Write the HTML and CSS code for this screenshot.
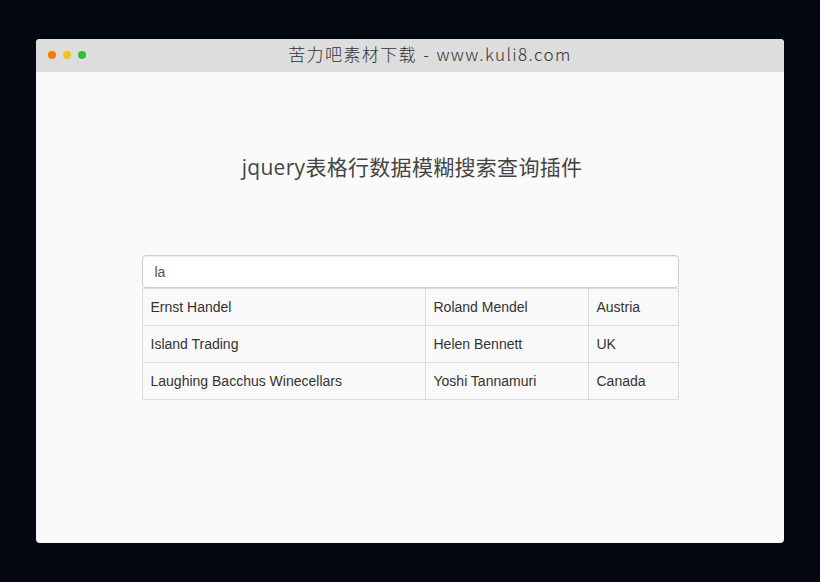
FILE: index.html
```html
<!DOCTYPE html>
<html lang="zh">
<head>
<meta charset="utf-8">
<title>jquery表格行数据模糊搜索查询插件</title>
<link rel="stylesheet" href="styles.css">
</head>
<body>
<div class="window">
  <div class="titlebar">
    <div class="dots">
      <span class="dot dot-orange"></span>
      <span class="dot dot-yellow"></span>
      <span class="dot dot-green"></span>
    </div>
    <div class="title">苦力吧素材下载 - www.kuli8.com</div>
  </div>
  <div class="content">
    <h1 class="heading">jquery表格行数据模糊搜索查询插件</h1>
    <div class="search-box">
      <input class="search-input" type="text" value="la">
      <table class="data-table">
        <tr><td class="c1">Ernst Handel</td><td class="c2">Roland Mendel</td><td class="c3">Austria</td></tr>
        <tr><td class="c1">Island Trading</td><td class="c2">Helen Bennett</td><td class="c3">UK</td></tr>
        <tr><td class="c1">Laughing Bacchus Winecellars</td><td class="c2">Yoshi Tannamuri</td><td class="c3">Canada</td></tr>
      </table>
    </div>
  </div>
</div>
</body>
</html>
```

FILE: styles.css
```css
html, body {
  margin: 0;
  padding: 0;
  background: #030811;
}
body {
  padding: 39px 0 0 36px;
  height: 582px;
  box-sizing: border-box;
}
.window {
  width: 748px;
  height: 504px;
  background: #fafafa;
  border-radius: 4px;
  overflow: hidden;
  display: flex;
  flex-direction: column;
}
.titlebar {
  height: 33px;
  background: #dddddd;
  position: relative;
  display: flex;
  align-items: center;
  justify-content: center;
}
.dots {
  position: absolute;
  left: 12px;
  top: 12px;
  display: flex;
  gap: 7px;
}
.dot {
  width: 8px;
  height: 8px;
  border-radius: 50%;
  display: block;
}
.dot-orange { background: #f57c00; }
.dot-yellow { background: #f0c419; }
.dot-green { background: #2fbf3a; }
.title {
  font-family: "Noto Sans CJK SC", "DejaVu Sans", sans-serif;
  font-weight: 300;
  font-size: 17px;
  color: #333;
  letter-spacing: 1.4px;
  word-spacing: 1px;
  margin-left: 40px;
  margin-top: -4px;
}
.content {
  flex: 1;
  display: flex;
  flex-direction: column;
  align-items: center;
}
.heading {
  margin: 81px 0 0 4px;
  font-family: "Open Sans", "Noto Sans CJK SC", sans-serif;
  font-weight: normal;
  font-size: 21px;
  line-height: 28px;
  color: #444;
  letter-spacing: 0.3px;
}
.search-box {
  width: 537px;
  margin-top: 74px;
}
.search-input {
  display: block;
  box-sizing: border-box;
  width: 100%;
  height: 33px;
  margin: 0;
  padding: 0 12px;
  border: 1px solid #cccccc;
  border-radius: 4px;
  background: #fff;
  font-family: "Liberation Sans", Arial, sans-serif;
  font-size: 14px;
  color: #555;
  box-shadow: inset 0 1px 1px rgba(0,0,0,0.075);
  outline: none;
}
.data-table {
  width: 100%;
  border-collapse: collapse;
  background: #f9f9f9;
  font-family: "Liberation Sans", Arial, sans-serif;
  font-size: 14px;
  color: #333;
}
.data-table td {
  border: 1px solid #dddddd;
  height: 37px;
  padding: 0 8px;
  box-sizing: border-box;
  vertical-align: middle;
}
.c1 { width: 283px; }
.c2 { width: 163px; }
```
